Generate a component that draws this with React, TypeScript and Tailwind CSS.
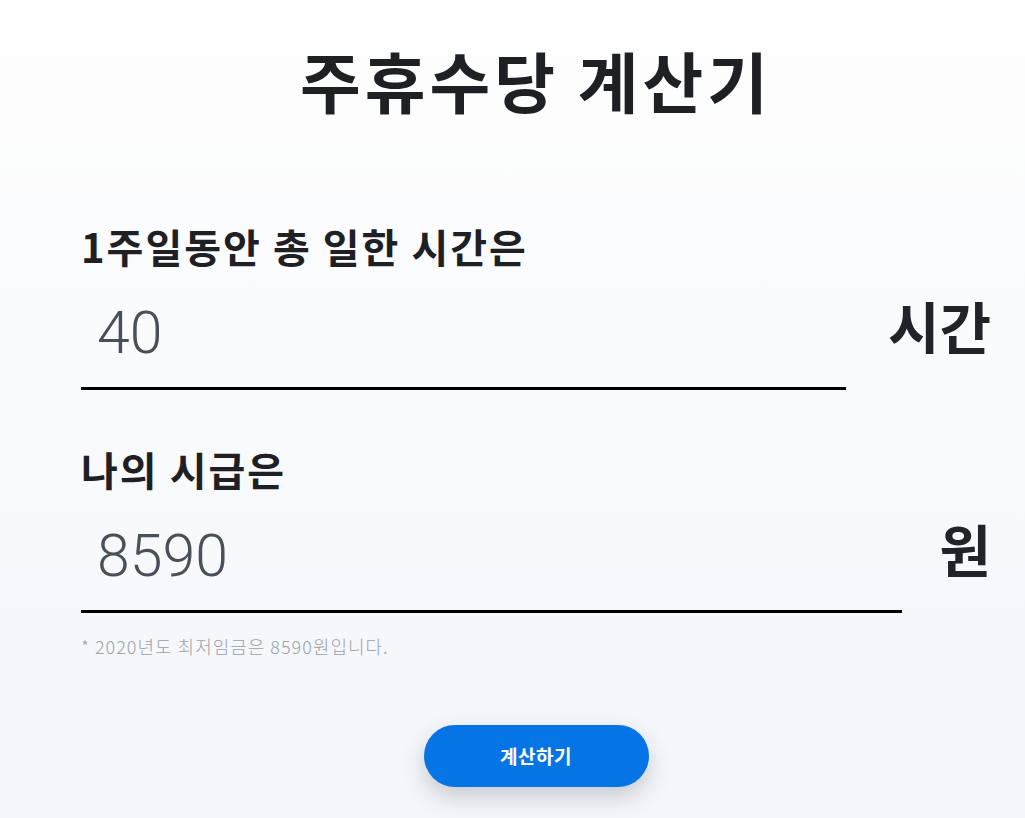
const kr = "font-['Noto_Sans_CJK_KR',sans-serif]";

function Field({ label, value, unit, gap }: { label: string; value: string; unit: string; gap: string }) {
  return (
    <div className="flex flex-col">
      <label className={`${kr} text-[40px] font-bold leading-[44px] tracking-[2px] text-[#1f2023]`}>{label}</label>
      <div className="mt-[29px] flex items-end">
        <input
          defaultValue={value}
          className="h-[90px] min-w-0 flex-1 border-b-[3px] border-black bg-transparent px-4 pb-[22px] font-['Roboto',sans-serif] text-[59px] font-light text-[#4a5059] outline-none"
        />
        <span className={`${kr} ${gap} mb-[37px] shrink-0 whitespace-nowrap text-[56px] font-bold leading-none text-[#212328]`}>
          {unit}
        </span>
      </div>
    </div>
  );
}

export default function App() {
  return (
    <div className="min-h-[818px] w-full bg-gradient-to-b from-[#fefefe] to-[#f3f6fa]">
      <div className="flex flex-col pl-[81px] pr-[34px]">
        <h1 className={`${kr} mt-[33px] text-center text-[66px] font-bold leading-[92px] tracking-[4px] text-[#1f2023]`}>
          주휴수당 계산기
        </h1>

        <div className="mt-[99px] flex flex-col gap-[57px]">
          <Field label="1주일동안 총 일한 시간은" value="40" unit="시간" gap="ml-[42px]" />
          <Field label="나의 시급은" value="8590" unit="원" gap="ml-[37px]" />
        </div>

        <p className={`${kr} mt-[20px] text-[18px] font-light leading-[27px] tracking-[1px] text-[#9ca1a8]`}>
          * 2020년도 최저임금은 8590원입니다.
        </p>

        <div className="mt-[65px] flex justify-center">
          <button className={`${kr} h-[62px] w-[225px] rounded-full bg-[#0575e6] text-[19px] font-bold tracking-[0.5px] text-white shadow-[0_10px_24px_rgba(0,0,0,0.18)]`}>
            계산하기
          </button>
        </div>
      </div>
    </div>
  );
}
